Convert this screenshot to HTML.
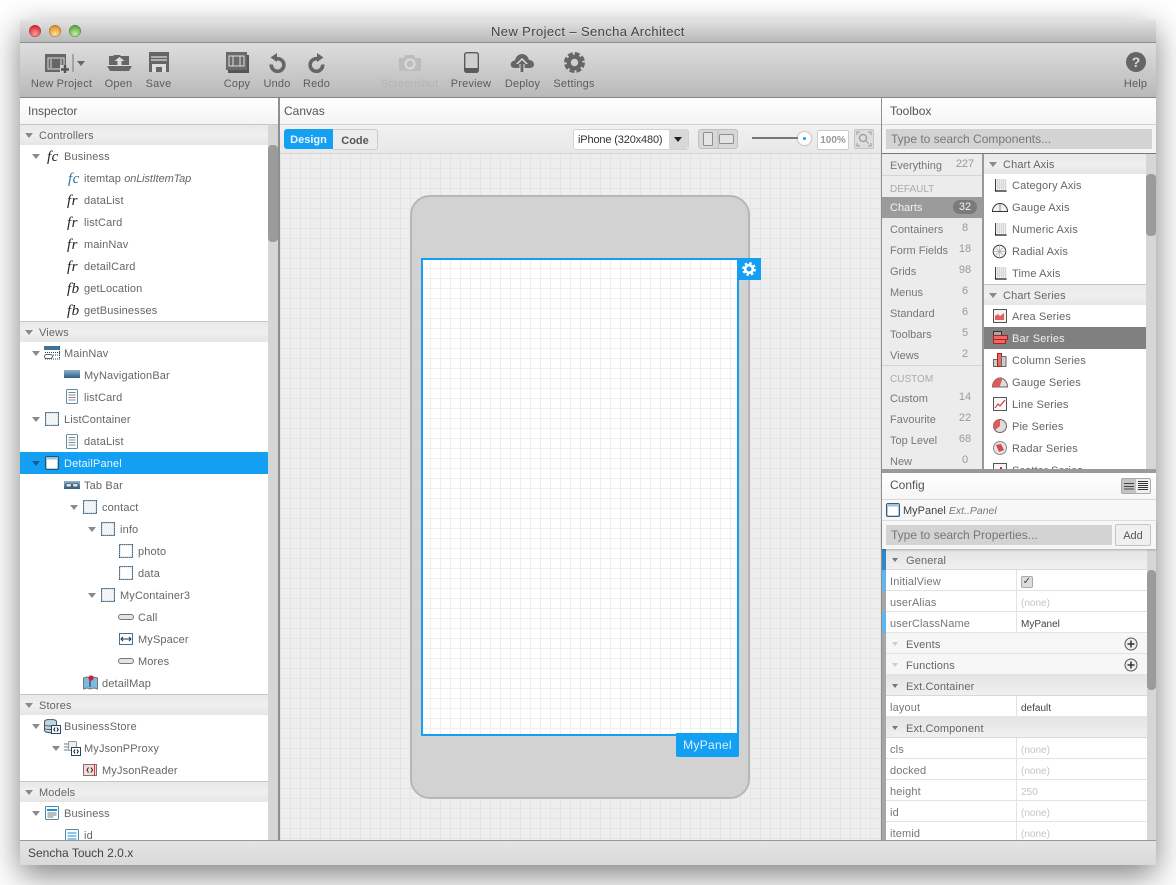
<!DOCTYPE html>
<html><head><meta charset="utf-8"><title>New Project - Sencha Architect</title>
<style>
html,body{margin:0;padding:0;background:#fff}
body{width:1176px;height:885px;position:relative;overflow:hidden;font:11px/24px "Liberation Sans",sans-serif;color:#666}
div,svg{position:absolute}
.b{white-space:nowrap}
.l{width:90px;margin-left:-45px;text-align:center;top:72px;color:#5c5c5c;letter-spacing:.18px}
.ti{top:99px;font-size:12px;color:#555}
.s{height:20px;background:linear-gradient(#e9e9e9,#efefef 50%,#e6e6e6);border-top:1px solid #c6c6c6}
.t{white-space:nowrap;height:22px;letter-spacing:.14px}
.a{width:0;height:0;border-left:4px solid transparent;border-right:4px solid transparent;border-top:5px solid #8a8a8a}
.f{font:italic 15px/24px "Liberation Serif",serif;color:#222;white-space:nowrap;letter-spacing:.4px}
.n{left:950px;width:30px;text-align:center;color:#999;white-space:nowrap;line-height:22px}
.c{left:890px;white-space:nowrap;color:#777}
.g{color:#aaa;font-size:10px}
.k{left:1021px;white-space:nowrap;color:#c4c4c4;font-size:10px;line-height:26px}
.v{color:#444;font-size:10px}
.rw{left:886px;width:261px;height:20px;background:#fff;border-bottom:1px solid #e3e3e3}
.cg{left:886px;width:261px;height:20px;background:linear-gradient(#e4e4e4,#f0f0f0);border-bottom:1px solid #d8d8d8}
</style></head><body>
<svg width="0" height="0" style="position:absolute">
<defs>
<symbol id="cn" viewBox="0 0 14 14"><rect x=".5" y=".5" width="13" height="13" fill="#f2f5f7" stroke="#08365a" stroke-width="1.200" stroke-dasharray="1.200 .8"/></symbol>
<symbol id="ce" viewBox="0 0 14 14"><rect x=".5" y=".5" width="13" height="13" fill="#fff" stroke="#08365a" stroke-width="1.200" stroke-dasharray="1.200 .8"/></symbol>
<symbol id="li" viewBox="0 0 12 15"><rect x=".5" y=".5" width="11" height="14" rx="1" fill="#fff" stroke="#5f8fae"/><path d="M2.500 3.500h7M2.500 6h7M2.500 8.500h7M2.500 11h7" stroke="#888"/></symbol>
<symbol id="bt" viewBox="0 0 16 6"><rect x=".5" y=".5" width="15" height="5" rx="2.500" fill="#e5e5e5" stroke="#777"/></symbol>
<symbol id="pn" viewBox="0 0 14 14"><rect x=".7" y=".7" width="12.600" height="12.600" rx="1" fill="#fff" stroke="#1c4a6b" stroke-width="1.200"/><rect x="1" y="1" width="12" height="2.500" fill="#9fc3dc"/></symbol>
<symbol id="gr" viewBox="0 0 14 14"><path d="M3 1v12h11" fill="none" stroke="#222"/><path d="M5 1v11M7 1v11M9 1v11M11 1v11M13 1v11M3 2h11M3 4h11M3 6h11M3 8h11M3 10h11" stroke="#ccc" stroke-width=".7"/><path d="M3 13h11" stroke="#111" stroke-dasharray="1 1" stroke-width="1.600"/></symbol>
</defs></svg>

<!-- window -->
<div style="left:20px;top:20px;width:1136px;height:845px;box-shadow:0 10px 30px rgba(0,0,0,.5);background:#888"></div>
<div style="left:20px;top:20px;width:1136px;height:22px;background:linear-gradient(#e2e2e2,#b9b9b9);border-bottom:1px solid #8e8e8e"></div>
<svg style="left:27px;top:23px" width="58" height="16"><defs><radialGradient id="r1" cy=".75" r=".7"><stop offset="0" stop-color="#ff9c9c"/><stop offset="1" stop-color="#d9202a"/></radialGradient><radialGradient id="r2" cy=".75" r=".7"><stop offset="0" stop-color="#ffe0a0"/><stop offset="1" stop-color="#da8a1e"/></radialGradient><radialGradient id="r3" cy=".75" r=".7"><stop offset="0" stop-color="#c6efa8"/><stop offset="1" stop-color="#4fa33c"/></radialGradient></defs><circle cx="8" cy="8" r="5.800" fill="url(#r1)" stroke="#8a4a4a" stroke-width=".5"/><circle cx="28" cy="8" r="5.800" fill="url(#r2)" stroke="#8a6a3a" stroke-width=".5"/><circle cx="48" cy="8" r="5.800" fill="url(#r3)" stroke="#4f7a4a" stroke-width=".5"/></svg>
<div class="b" style="left:491px;top:20px;font-size:13px;color:#444;letter-spacing:.39px;text-shadow:0 1px 0 rgba(255,255,255,.4)">New Project – Sencha Architect</div>

<!-- toolbar -->
<div style="left:20px;top:43px;width:1136px;height:54px;background:linear-gradient(#dedede,#b9b9b9);border-bottom:1px solid #878787"></div>
<svg style="left:44px;top:52px" width="44" height="22"><rect x="1" y="2" width="21" height="18" fill="#666"/><rect x="4" y="6" width="16" height="11" fill="none" stroke="#ddd"/><path d="M7 7v9M17 7v9" stroke="#ddd"/><rect x="16" y="13" width="10" height="9" fill="#d0d0d0"/><path d="M21 13v8M17 17.500h8" stroke="#555" stroke-width="2.500"/><path d="M29 2v18" stroke="#777"/><path d="M33 9h8l-4 5z" fill="#666"/></svg>
<svg style="left:107px;top:53px" width="25" height="20"><path d="M2 12V3h4l1-1h6l1 1h8v9z" fill="#666"/><path d="M12.500 4l5 4h-3v4h-4V8h-3z" fill="#ddd"/><path d="M0 13h25l-3 5H3z" fill="#666"/><path d="M0 12.500h25" stroke="#ddd"/></svg>
<svg style="left:149px;top:52px" width="20" height="20"><rect width="20" height="20" fill="#666"/><path d="M2 5h16M2 8h16" stroke="#ddd" stroke-width="1.300"/><path d="M3 12h14v8h-4v-5H7v5H3z" fill="#ddd"/></svg>
<svg style="left:226px;top:52px" width="23" height="21"><rect x="2" y="3" width="21" height="18" fill="#555"/><rect width="21" height="18" fill="#6a6a6a"/><rect x="3" y="4" width="15" height="10" fill="none" stroke="#ddd"/><path d="M7 4v10M14 4v10" stroke="#ddd"/></svg>
<svg style="left:268px;top:53px" width="18" height="20"><path d="M6.500 6.500a6.300 6.300 0 1 1-3.200 5" fill="none" stroke="#666" stroke-width="3.600"/><path d="M9 0v9L2.500 4.500z" fill="#666"/></svg>
<svg style="left:308px;top:53px" width="18" height="20"><path d="M11.500 6.500a6.300 6.300 0 1 0 3.200 5" fill="none" stroke="#666" stroke-width="3.600"/><path d="M9 0v9l6.500-4.500z" fill="#666"/></svg>
<svg style="left:398px;top:54px" width="24" height="18"><path d="M1 4h5l1-3h9l1 3h6v13H1z" fill="#bdbdbd"/><circle cx="12" cy="10" r="4.500" fill="#bdbdbd" stroke="#dcdcdc" stroke-width="2"/></svg>
<svg style="left:464px;top:52px" width="15" height="21"><rect x=".7" y=".7" width="13.600" height="19.600" rx="2" fill="#cfcfcf" stroke="#5a5a5a" stroke-width="1.400"/><rect x="1" y="16" width="13" height="4" fill="#5a5a5a"/></svg>
<svg style="left:510px;top:53px" width="24" height="20"><path d="M5 15C1 15 0 12 1 10s3-2.500 4-2.500C6 3 9 1 12 1s6 2 7 6c3 0 5 2 5 4.500S22 15 19 15z" fill="#666"/><path d="M12 5l6 6h-3.500v8h-5v-8H6z" fill="#e0e0e0"/><path d="M12 7l4 4h-2.500v8h-3v-8H8z" fill="#666"/></svg>
<svg style="left:564px;top:52px" width="21" height="21"><circle cx="10.500" cy="10.500" r="5.800" fill="none" stroke="#666" stroke-width="4.200"/><circle cx="10.500" cy="10.500" r="8.500" fill="none" stroke="#666" stroke-width="4" stroke-dasharray="4.680 2"/></svg>
<svg style="left:1126px;top:52px" width="20" height="20"><circle cx="10" cy="10" r="10" fill="#666"/><text x="10" y="15" text-anchor="middle" font-family="Liberation Sans" font-weight="bold" font-size="14" fill="#ddd">?</text></svg>
<div class="l" style="left:61.500px">New Project</div><div class="l" style="left:118.500px">Open</div><div class="l" style="left:158.500px">Save</div><div class="l" style="left:237px">Copy</div><div class="l" style="left:277px">Undo</div><div class="l" style="left:316.500px">Redo</div><div class="l" style="left:409.500px;color:#b4b4b4">Screenshot</div><div class="l" style="left:471px">Preview</div><div class="l" style="left:522.500px">Deploy</div><div class="l" style="left:574px">Settings</div><div class="l" style="left:1135.500px">Help</div>

<!-- canvas -->
<div style="left:280px;top:153px;width:601px;height:687px;background-color:#eee;background-image:linear-gradient(#e4e4e4 1px,transparent 1px),linear-gradient(90deg,#e4e4e4 1px,transparent 1px);background-size:10px 10px;background-position:0 5px"></div>
<div style="left:410px;top:195px;width:336px;height:600px;background:#d2d2d2;border:2px solid #b6b6b6;border-radius:20px"></div>
<div style="left:421px;top:258px;width:314px;height:474px;border:2px solid #14a0f2;background-color:#fff;background-image:linear-gradient(#efefef 1px,transparent 1px),linear-gradient(90deg,#efefef 1px,transparent 1px);background-size:10px 10px;background-position:7px 8px"></div>
<div style="left:737px;top:258px;width:24px;height:22px;background:#14a0f2"></div>
<svg style="left:742px;top:262px" width="14" height="14"><circle cx="7" cy="7" r="3.800" fill="none" stroke="#fff" stroke-width="2.600"/><circle cx="7" cy="7" r="5.700" fill="none" stroke="#fff" stroke-width="2.400" stroke-dasharray="2.480 2"/></svg>
<div style="left:676px;top:733px;width:63px;height:24px;background:#14a0f2;border-radius:0 0 2px 2px;color:#d9f0ff;font-size:12px;line-height:25px;text-align:center;letter-spacing:.3px">MyPanel</div>

<!-- canvas header -->
<div style="left:280px;top:98px;width:601px;height:26px;background:linear-gradient(#fff,#f4f4f4);border-bottom:1px solid #d0d0d0"></div>
<div class="ti b" style="left:284px">Canvas</div>
<div style="left:280px;top:125px;width:601px;height:28px;background:linear-gradient(#f1f1f1,#e8e8e8);border-bottom:1px solid #d6d6d6"></div>
<div style="left:284px;top:129px;width:49px;height:20px;background:#14a0f2;border-radius:3px 0 0 3px;color:#e8f6ff;font-weight:bold;text-align:center;line-height:23px">Design</div>
<div style="left:333px;top:129px;width:44px;height:19px;background:#ececec;border:1px solid #ccc;border-left:0;border-radius:0 3px 3px 0;color:#555;font-weight:bold;text-align:center;line-height:22px">Code</div>
<div style="left:573px;top:129px;width:114px;height:19px;background:#fff;border:1px solid #d2d2d2;border-radius:3px;color:#333;line-height:20px;text-indent:4px;letter-spacing:-.15px">iPhone (320x480)</div>
<div style="left:669px;top:129px;width:19px;height:20px;background:#d8d8d8;border-radius:0 3px 3px 0"></div>
<div class="a" style="left:674px;top:137px;border-top-color:#222"></div>
<div style="left:698px;top:129px;width:38px;height:18px;background:#d8d8d8;border:1px solid #c0c0c0;border-radius:3px"></div>
<svg style="left:698px;top:129px" width="40" height="20"><path d="M20 1v18" stroke="#bbb"/><rect x="5.500" y="3.500" width="9" height="13" rx="1" fill="#e4e4e4" stroke="#8e8e8e"/><rect x="21.500" y="5.500" width="14" height="9" rx="1" fill="#e4e4e4" stroke="#8e8e8e"/></svg>
<div style="left:752px;top:137px;width:48px;height:2px;background:#777"></div>
<div style="left:798px;top:132px;width:13px;height:13px;border-radius:50%;background:#fff;box-shadow:0 0 2px #888"></div>
<div style="left:803px;top:137px;width:3px;height:3px;border-radius:50%;background:#14a0f2"></div>
<div style="left:817px;top:130px;width:30px;height:18px;background:#fff;border:1px solid #ccc;border-radius:2px;color:#999;font-size:10px;font-weight:bold;line-height:20px;text-align:center">100%</div>
<div style="left:854px;top:129px;width:18px;height:18px;background:#ddd;border:1px solid #c4c4c4;border-radius:2px"></div>
<svg style="left:855px;top:130px" width="18" height="18"><circle cx="8" cy="8" r="3.500" fill="none" stroke="#999" stroke-width="1.300"/><path d="M10.500 10.500l3 3M2 5V2h3M13 2h3v3M2 13v3h3M16 13v3h-3" fill="none" stroke="#999"/></svg>

<!-- inspector -->
<div style="left:20px;top:98px;width:258px;height:26px;background:linear-gradient(#fff,#f4f4f4);border-bottom:1px solid #c9c9c9"></div>
<div class="ti b" style="left:28px">Inspector</div>
<div style="left:20px;top:125px;width:248px;height:715px;background:#fff"></div>
<div style="left:268px;top:125px;width:10px;height:715px;background:#d6d6d6"></div>
<div style="left:268px;top:145px;width:10px;height:97px;background:#9b9b9b;border-radius:4px"></div>
<div style="left:278px;top:98px;width:2px;height:742px;background:#8f8f8f"></div>

<div class="s" style="left:20px;top:124px;width:248px"></div><div class="a" style="left:25px;top:133px"></div><div class="t" style="left:39px;top:124px">Controllers</div>
<div class="a" style="left:32px;top:154px"></div><div class="f" style="left:47px;top:145px">fc</div><div class="t" style="left:64px;top:145px">Business</div>
<div class="f" style="left:68px;top:167px;color:#2f6f9f">fc</div><div class="t" style="left:84px;top:167px">itemtap <i style="letter-spacing:-.14px">onListItemTap</i></div>
<div class="f" style="left:67px;top:189px">fr</div><div class="t" style="left:84px;top:189px">dataList</div>
<div class="f" style="left:67px;top:211px">fr</div><div class="t" style="left:84px;top:211px">listCard</div>
<div class="f" style="left:67px;top:233px">fr</div><div class="t" style="left:84px;top:233px">mainNav</div>
<div class="f" style="left:67px;top:255px">fr</div><div class="t" style="left:84px;top:255px">detailCard</div>
<div class="f" style="left:67px;top:277px">fb</div><div class="t" style="left:84px;top:277px">getLocation</div>
<div class="f" style="left:67px;top:299px">fb</div><div class="t" style="left:84px;top:299px">getBusinesses</div>

<div class="s" style="left:20px;top:321px;width:248px"></div><div class="a" style="left:25px;top:330px"></div><div class="t" style="left:39px;top:321px">Views</div>
<div class="a" style="left:32px;top:351px"></div><svg style="left:44px;top:346px" width="16" height="14"><rect x="0" y="0" width="16" height="4" fill="#3f7499"/><path d="M1 6.500h15M1 9h15M1 13h15M15.500 1v12" stroke="#1c4a6b" stroke-dasharray="1 1"/><rect x=".5" y="8.500" width="8" height="4" rx="2" fill="#fff" stroke="#666"/></svg><div class="t" style="left:64px;top:342px">MainNav</div>
<svg style="left:64px;top:370px" width="16" height="9"><defs><linearGradient id="nb" x1="0" y1="0" x2="0" y2="1"><stop offset="0" stop-color="#8fb3cc"/><stop offset="1" stop-color="#2d5f85"/></linearGradient></defs><rect width="16" height="8" fill="url(#nb)"/></svg><div class="t" style="left:84px;top:364px">MyNavigationBar</div>
<svg style="left:66px;top:389px" width="12" height="15"><use href="#li"/></svg><div class="t" style="left:84px;top:386px">listCard</div>
<div class="a" style="left:32px;top:417px"></div><svg style="left:45px;top:412px" width="14" height="14"><use href="#cn"/></svg><div class="t" style="left:64px;top:408px">ListContainer</div>
<svg style="left:66px;top:434px" width="12" height="15"><use href="#li"/></svg><div class="t" style="left:84px;top:430px">dataList</div>
<div style="left:20px;top:452px;width:248px;height:22px;background:#14a0f2"></div><div class="a" style="left:32px;top:461px;border-top-color:#155d8c"></div><svg style="left:45px;top:456px" width="14" height="14"><use href="#pn"/></svg><div class="t" style="left:64px;top:452px;color:#e6f5ff">DetailPanel</div>
<svg style="left:64px;top:481px" width="16" height="8"><rect width="16" height="8" fill="url(#nb)"/><rect x="2" y="2.500" width="5.500" height="3.500" rx="1.500" fill="#ddd" stroke="#234"  stroke-width=".6"/><rect x="8.500" y="2.500" width="5.500" height="3.500" rx="1.500" fill="#ddd" stroke="#234" stroke-width=".6"/></svg><div class="t" style="left:84px;top:474px">Tab Bar</div>
<div class="a" style="left:70px;top:505px"></div><svg style="left:83px;top:500px" width="14" height="14"><use href="#cn"/></svg><div class="t" style="left:102px;top:496px">contact</div>
<div class="a" style="left:88px;top:527px"></div><svg style="left:101px;top:522px" width="14" height="14"><use href="#cn"/></svg><div class="t" style="left:120px;top:518px">info</div>
<svg style="left:119px;top:544px" width="14" height="14"><use href="#ce"/></svg><div class="t" style="left:138px;top:540px">photo</div>
<svg style="left:119px;top:566px" width="14" height="14"><use href="#ce"/></svg><div class="t" style="left:138px;top:562px">data</div>
<div class="a" style="left:88px;top:593px"></div><svg style="left:101px;top:588px" width="14" height="14"><use href="#cn"/></svg><div class="t" style="left:120px;top:584px">MyContainer3</div>
<svg style="left:118px;top:614px" width="16" height="6"><use href="#bt"/></svg><div class="t" style="left:138px;top:606px">Call</div>
<svg style="left:119px;top:633px" width="14" height="12"><rect x=".5" y=".5" width="13" height="11" fill="#fff" stroke="#3f7499"/><path d="M2 6h10M4 4L2 6l2 2M10 4l2 2-2 2" fill="none" stroke="#234"/></svg><div class="t" style="left:138px;top:628px">MySpacer</div>
<svg style="left:118px;top:658px" width="16" height="6"><use href="#bt"/></svg><div class="t" style="left:138px;top:650px">Mores</div>
<svg style="left:83px;top:675px" width="15" height="15"><path d="M.5 3L4 2l3 1 4-1 3.500 1v11L11 13l-4 1-3-1-3.500 1z" fill="#7db9e2" stroke="#777"/><path d="M7 5v7" stroke="#222"/><circle cx="8" cy="3" r="2.600" fill="#d81e2c"/></svg><div class="t" style="left:102px;top:672px">detailMap</div>

<div class="s" style="left:20px;top:694px;width:248px"></div><div class="a" style="left:25px;top:703px"></div><div class="t" style="left:39px;top:694px">Stores</div>
<div class="a" style="left:32px;top:724px"></div><svg style="left:44px;top:719px" width="17" height="15"><ellipse cx="6.500" cy="2.500" rx="6" ry="2.200" fill="#b7cad8" stroke="#456"/><path d="M.5 2.500v9c0 1.300 2.500 2.200 6 2.200s6-.9 6-2.200v-9" fill="#c5d5e0" stroke="#456"/><path d="M.5 6c1 1.300 11 1.300 12 0M.5 9.500c1 1.300 11 1.300 12 0" fill="none" stroke="#456"/><rect x="7.500" y="6.500" width="9" height="8" fill="#fff" stroke="#1c4a6b"/><path d="M11 8.500L9.800 10.500l1.200 2M13 8.500l1.200 2-1.200 2" fill="none" stroke="#111"/></svg><div class="t" style="left:64px;top:715px">BusinessStore</div>
<div class="a" style="left:52px;top:746px"></div><svg style="left:64px;top:741px" width="17" height="15"><path d="M0 3h4M0 6h4M0 9h4" stroke="#777"/><rect x="4.500" y=".5" width="8" height="9" rx="1" fill="#eee" stroke="#999"/><rect x="7.500" y="6.500" width="9" height="8" fill="#fff" stroke="#1c4a6b"/><path d="M11 8.500L9.800 10.500l1.200 2M13 8.500l1.200 2-1.200 2" fill="none" stroke="#111"/></svg><div class="t" style="left:84px;top:737px">MyJsonPProxy</div>
<svg style="left:83px;top:764px" width="14" height="12"><rect x=".5" y=".5" width="13" height="11" fill="#f6dada" stroke="#777"/><path d="M5.500 3.500L4 6l1.500 2.500M8 3.500L9.500 6 8 8.500" fill="none" stroke="#222"/><path d="M11.500 0v12" stroke="#e03030"/></svg><div class="t" style="left:102px;top:759px">MyJsonReader</div>

<div class="s" style="left:20px;top:781px;width:248px"></div><div class="a" style="left:25px;top:790px"></div><div class="t" style="left:39px;top:781px">Models</div>
<div class="a" style="left:32px;top:811px"></div><svg style="left:45px;top:806px" width="14" height="14"><rect x=".5" y=".5" width="13" height="13" rx="1" fill="#fff" stroke="#4d87ac"/><rect x="2" y="3" width="10" height="2" fill="#1a8fd8"/><path d="M2.500 7h9M2.500 9h9M2.500 11h6" stroke="#777"/></svg><div class="t" style="left:64px;top:802px">Business</div>
<svg style="left:65px;top:829px" width="14" height="14"><rect x=".5" y=".5" width="13" height="13" rx="1" fill="#fff" stroke="#4d87ac"/><path d="M2.500 4h9M2.500 7h9M2.500 10h9" stroke="#1a8fd8"/></svg><div class="t" style="left:84px;top:824px">id</div>

<!-- toolbox -->
<div style="left:881px;top:98px;width:1px;height:742px;background:#8f8f8f"></div>
<div style="left:882px;top:98px;width:274px;height:26px;background:linear-gradient(#fff,#f6f6f6);border-bottom:1px solid #d0d0d0"></div>
<div class="ti b" style="left:890px">Toolbox</div>
<div style="left:882px;top:125px;width:274px;height:28px;background:#f4f4f4;box-shadow:0 1px 1px rgba(0,0,0,.15)"></div>
<div style="left:886px;top:129px;width:266px;height:20px;background:#d3d3d3;color:#777;font-size:12px;line-height:20px;text-indent:5px;white-space:nowrap">Type to search Components...</div>
<div style="left:882px;top:154px;width:100px;height:315px;background:#ececec"></div>
<div style="left:982px;top:154px;width:2px;height:315px;background:#999"></div>
<div style="left:984px;top:154px;width:162px;height:315px;background:#fff"></div>
<div style="left:1146px;top:154px;width:10px;height:315px;background:#d6d6d6"></div>
<div style="left:1146px;top:174px;width:10px;height:62px;background:#9b9b9b;border-radius:4px"></div>

<div class="c" style="top:154px">Everything</div><div class="n" style="top:153px">227</div>
<div style="left:882px;top:175px;width:100px;height:1px;background:#d4d4d4"></div>
<div class="c g" style="top:178px">DEFAULT</div>
<div style="left:882px;top:197px;width:100px;height:21px;background:#9b9b9b"></div>
<div class="c" style="top:196px;color:#f2f2f2">Charts</div>
<div style="left:953px;top:200px;width:24px;height:14px;border-radius:7px;background:#7a7a7a;color:#f2f2f2;line-height:14px;text-align:center">32</div>
<div class="c" style="top:218px">Containers</div><div class="n" style="top:217px">8</div>
<div class="c" style="top:239px">Form Fields</div><div class="n" style="top:238px">18</div>
<div class="c" style="top:260px">Grids</div><div class="n" style="top:259px">98</div>
<div class="c" style="top:281px">Menus</div><div class="n" style="top:280px">6</div>
<div class="c" style="top:302px">Standard</div><div class="n" style="top:301px">6</div>
<div class="c" style="top:323px">Toolbars</div><div class="n" style="top:322px">5</div>
<div class="c" style="top:344px">Views</div><div class="n" style="top:343px">2</div>
<div style="left:882px;top:365px;width:100px;height:1px;background:#d4d4d4"></div>
<div class="c g" style="top:368px">CUSTOM</div>
<div class="c" style="top:387px">Custom</div><div class="n" style="top:386px">14</div>
<div class="c" style="top:408px">Favourite</div><div class="n" style="top:407px">22</div>
<div class="c" style="top:429px">Top Level</div><div class="n" style="top:428px">68</div>
<div class="c" style="top:450px">New</div><div class="n" style="top:449px">0</div>

<div class="s" style="left:984px;top:154px;width:162px;border-top:0"></div><div class="a" style="left:989px;top:162px"></div><div class="t" style="left:1003px;top:153px">Chart Axis</div>
<svg style="left:992px;top:178px" width="15" height="14"><use href="#gr"/></svg><div class="t" style="left:1012px;top:174px">Category Axis</div>
<svg style="left:992px;top:201px" width="16" height="12"><path d="M.5 10.500a7.500 8 0 0 1 15 0z" fill="#f2f2f2" stroke="#333"/><path d="M8 3v7" stroke="#888"/></svg><div class="t" style="left:1012px;top:196px">Gauge Axis</div>
<svg style="left:992px;top:222px" width="15" height="14"><use href="#gr"/></svg><div class="t" style="left:1012px;top:218px">Numeric Axis</div>
<svg style="left:992px;top:244px" width="15" height="15"><circle cx="7.500" cy="7.500" r="6.300" fill="#f6f6f6" stroke="#333"/><path d="M7.500 1v13M1 7.500h13M3 3l9 9M12 3l-9 9" stroke="#aaa" stroke-width=".7"/></svg><div class="t" style="left:1012px;top:240px">Radial Axis</div>
<svg style="left:992px;top:266px" width="15" height="14"><use href="#gr"/></svg><div class="t" style="left:1012px;top:262px">Time Axis</div>
<div class="s" style="left:984px;top:284px;width:162px"></div><div class="a" style="left:989px;top:293px"></div><div class="t" style="left:1003px;top:284px">Chart Series</div>
<svg style="left:993px;top:309px" width="14" height="14"><rect x=".5" y=".5" width="13" height="13" fill="#f2f2f2" stroke="#555"/><path d="M2 11V7l3-2 2 2 4-3v7z" fill="#e46060"/></svg><div class="t" style="left:1012px;top:305px">Area Series</div>
<div style="left:984px;top:327px;width:162px;height:22px;background:#808080"></div><svg style="left:993px;top:331px" width="15" height="14"><rect x=".5" y=".5" width="8" height="4" fill="#aaa" stroke="#333"/><rect x=".5" y="4.500" width="14" height="4" fill="#e66" stroke="#a22"/><rect x=".5" y="8.500" width="12" height="4" fill="#e66" stroke="#a22"/></svg><div class="t" style="left:1012px;top:327px;color:#eee">Bar Series</div>
<svg style="left:993px;top:353px" width="14" height="14"><rect x=".5" y="6.500" width="4" height="7" fill="#ccc" stroke="#666"/><rect x="4.500" y=".5" width="4" height="13" fill="#e66" stroke="#a22"/><rect x="8.500" y="3.500" width="4.500" height="10" fill="#ccc" stroke="#666"/></svg><div class="t" style="left:1012px;top:349px">Column Series</div>
<svg style="left:992px;top:376px" width="16" height="12"><path d="M.5 11a7.500 9 0 0 1 15 0z" fill="#ddd" stroke="#666"/><path d="M.5 11a7.500 9 0 0 1 10-8.500L7.500 11z" fill="#e05a5a"/></svg><div class="t" style="left:1012px;top:371px">Gauge Series</div>
<svg style="left:993px;top:397px" width="14" height="14"><rect x=".5" y=".5" width="13" height="13" fill="#f8f8f8" stroke="#555"/><path d="M2 11l3-4 2 2 5-6" fill="none" stroke="#d22"/></svg><div class="t" style="left:1012px;top:393px">Line Series</div>
<svg style="left:993px;top:419px" width="14" height="14"><circle cx="7" cy="7" r="6.500" fill="#ddd" stroke="#666"/><path d="M7 7V.5a6.500 6.500 0 0 0-5 10.800z" fill="#e05a5a"/></svg><div class="t" style="left:1012px;top:415px">Pie Series</div>
<svg style="left:993px;top:441px" width="14" height="14"><circle cx="7" cy="7" r="6.500" fill="#e4e4e4" stroke="#888"/><path d="M3 4l5-1 3 6-5 2z" fill="#d84a4a"/></svg><div class="t" style="left:1012px;top:437px">Radar Series</div>
<svg style="left:993px;top:463px" width="14" height="14"><rect x=".5" y=".5" width="13" height="13" fill="#f6f6f6" stroke="#555"/><path d="M3 8h2M7 5h2M10 8h2" stroke="#d22" stroke-width="2"/></svg><div class="t" style="left:1012px;top:459px">Scatter Series</div>

<!-- config -->
<div style="left:882px;top:469px;width:274px;height:4px;background:#9a9a9a"></div>
<div style="left:882px;top:473px;width:274px;height:26px;background:linear-gradient(#fff,#f6f6f6);border-bottom:1px solid #d8d8d8"></div>
<div class="ti b" style="left:890px;top:473px">Config</div>
<div style="left:1121px;top:478px;width:15px;height:14px;background:#c4c4c4;border:1px solid #aaa;border-radius:2px 0 0 2px"></div>
<div style="left:1136px;top:478px;width:14px;height:14px;background:#eee;border:1px solid #aaa;border-left:0;border-radius:0 2px 2px 0"></div>
<svg style="left:1122px;top:479px" width="28" height="14"><path d="M2 4.500h10M2 7.500h10M2 10h10" stroke="#444"/><path d="M16 2.500h10M16 4.500h10M16 6.500h10M16 8.500h10M16 10.500h10" stroke="#333"/></svg>
<div style="left:882px;top:500px;width:274px;height:20px;background:#f7f7f7;border-bottom:1px solid #e0e0e0"></div>
<svg style="left:886px;top:503px" width="14" height="14"><use href="#pn"/></svg>
<div class="b" style="left:903px;top:499px;color:#444">MyPanel <i style="color:#777;font-size:10.500px">Ext..Panel</i></div>
<div style="left:882px;top:521px;width:274px;height:28px;background:#f6f6f6;box-shadow:0 1px 2px rgba(0,0,0,.25);z-index:3"></div>
<div style="left:886px;top:525px;width:226px;height:20px;background:#d3d3d3;color:#777;font-size:12px;line-height:20px;text-indent:5px;white-space:nowrap;z-index:4">Type to search Properties...</div>
<div style="left:1115px;top:524px;width:34px;height:20px;background:#f0f0f0;border:1px solid #c4c4c4;border-radius:2px;color:#555;line-height:23px;text-align:center;z-index:4">Add</div>

<div style="left:882px;top:549px;width:4px;height:291px;background:#a6a6a6"></div>
<div style="left:882px;top:549px;width:4px;height:21px;background:#2f88c8"></div>
<div style="left:882px;top:570px;width:4px;height:21px;background:#5db8f0"></div>
<div style="left:882px;top:612px;width:4px;height:21px;background:#5db8f0"></div>
<div style="left:1147px;top:549px;width:9px;height:291px;background:#d6d6d6"></div>
<div style="left:1147px;top:570px;width:9px;height:120px;background:#9b9b9b;border-radius:4px"></div>

<div class="cg" style="top:549px"></div><div class="a" style="left:892px;top:558px;border-width:4px 3.500px 0;border-top-color:#777"></div><div class="t" style="left:906px;top:549px">General</div>
<div class="rw" style="top:570px"></div><div class="t" style="left:890px;top:570px;color:#777">InitialView</div><div style="left:1021px;top:576px;width:10px;height:10px;background:#ddd;border:1px solid #aaa;border-radius:2px;color:#444;font-size:10px;line-height:10px;text-align:center">✓</div>
<div class="rw" style="top:591px"></div><div class="t" style="left:890px;top:591px;color:#777">userAlias</div><div class="k" style="top:591px">(none)</div>
<div class="rw" style="top:612px"></div><div class="t" style="left:890px;top:612px;color:#777">userClassName</div><div class="k v" style="top:612px;color:#444">MyPanel</div>
<div class="rw" style="top:633px;background:#f6f6f6"></div><div class="a" style="left:892px;top:642px;border-width:4px 3.500px 0;border-top-color:#ccc"></div><div class="t" style="left:906px;top:633px">Events</div>
<div class="rw" style="top:654px;background:#f6f6f6"></div><div class="a" style="left:892px;top:663px;border-width:4px 3.500px 0;border-top-color:#ccc"></div><div class="t" style="left:906px;top:654px">Functions</div>
<svg style="left:1124px;top:637px" width="14" height="35"><circle cx="7" cy="7" r="6" fill="#eee" stroke="#555"/><path d="M7 3.500v7M3.500 7h7" stroke="#333" stroke-width="1.500"/><circle cx="7" cy="28" r="6" fill="#eee" stroke="#555"/><path d="M7 24.500v7M3.500 28h7" stroke="#333" stroke-width="1.500"/></svg>
<div class="cg" style="top:675px"></div><div class="a" style="left:892px;top:684px;border-width:4px 3.500px 0;border-top-color:#777"></div><div class="t" style="left:906px;top:675px">Ext.Container</div>
<div class="rw" style="top:696px"></div><div class="t" style="left:890px;top:696px;color:#777">layout</div><div class="k v" style="top:696px;color:#444">default</div>
<div class="cg" style="top:717px"></div><div class="a" style="left:892px;top:726px;border-width:4px 3.500px 0;border-top-color:#777"></div><div class="t" style="left:906px;top:717px">Ext.Component</div>
<div class="rw" style="top:738px"></div><div class="t" style="left:890px;top:738px;color:#777">cls</div><div class="k" style="top:738px">(none)</div>
<div class="rw" style="top:759px"></div><div class="t" style="left:890px;top:759px;color:#777">docked</div><div class="k" style="top:759px">(none)</div>
<div class="rw" style="top:780px"></div><div class="t" style="left:890px;top:780px;color:#777">height</div><div class="k" style="top:780px">250</div>
<div class="rw" style="top:801px"></div><div class="t" style="left:890px;top:801px;color:#777">id</div><div class="k" style="top:801px">(none)</div>
<div class="rw" style="top:822px"></div><div class="t" style="left:890px;top:822px;color:#777">itemid</div><div class="k" style="top:822px">(none)</div>
<div style="left:1016px;top:570px;width:1px;height:63px;background:#e3e3e3"></div>
<div style="left:1016px;top:696px;width:1px;height:21px;background:#e3e3e3"></div>
<div style="left:1016px;top:738px;width:1px;height:102px;background:#e3e3e3"></div>

<!-- status bar -->
<div style="left:20px;top:840px;width:1136px;height:24px;background:linear-gradient(#e4e4e4,#d9d9d9);border-top:1px solid #9a9a9a;z-index:5"></div>
<div class="b" style="left:28px;top:841px;font-size:12px;color:#444;z-index:6">Sencha Touch 2.0.x</div>
</body></html>
